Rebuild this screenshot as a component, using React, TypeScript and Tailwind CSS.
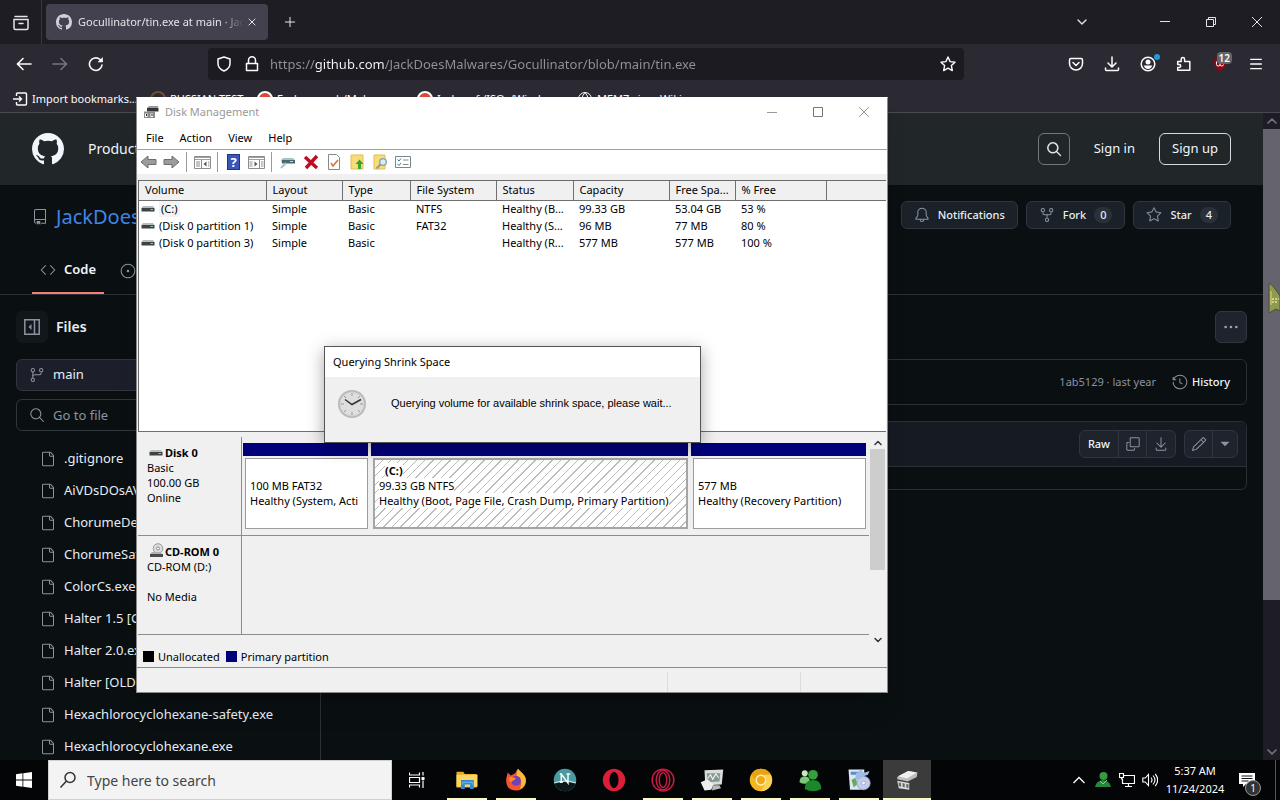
import type { ReactNode } from "react";
import {
  GoBell,
  GoCode,
  GoCopy,
  GoDownload,
  GoFile,
  GoGitBranch,
  GoHistory,
  GoIssueOpened,
  GoKebabHorizontal,
  GoPencil,
  GoRepo,
  GoRepoForked,
  GoSearch,
  GoStar,
  GoTriangleDown,
} from "react-icons/go";
import { ChevronDown, ChevronUp, Menu, Plus, X } from "lucide-react";

const files = [
  ".gitignore",
  "AiVDsDOsAV.exe",
  "ChorumeDeath.exe",
  "ChorumeSafety.exe",
  "ColorCs.exe",
  "Halter 1.5 [GDI].exe",
  "Halter 2.0.exe",
  "Halter [OLD].exe",
  "Hexachlorocyclohexane-safety.exe",
  "Hexachlorocyclohexane.exe",
];

const columns = [
  { label: "Volume", width: "w-[127px]" },
  { label: "Layout", width: "w-[76px]" },
  { label: "Type", width: "w-[68px]" },
  { label: "File System", width: "w-[86px]" },
  { label: "Status", width: "w-[77px]" },
  { label: "Capacity", width: "w-[96px]" },
  { label: "Free Spa...", width: "w-[66px]" },
  { label: "% Free", width: "w-[91px]" },
  { label: "", width: "" },
];

const volumes = [
  ["(C:)", "Simple", "Basic", "NTFS", "Healthy (B...", "99.33 GB", "53.04 GB", "53 %"],
  ["(Disk 0 partition 1)", "Simple", "Basic", "FAT32", "Healthy (S...", "96 MB", "77 MB", "80 %"],
  ["(Disk 0 partition 3)", "Simple", "Basic", "", "Healthy (R...", "577 MB", "577 MB", "100 %"],
];

function Svg({ children, size = "size-4", box = "0 0 16 16" }: { children: ReactNode; size?: string; box?: string }) {
  return (
    <svg viewBox={box} className={`${size} shrink-0`} fill="none" stroke="currentColor" aria-hidden="true">
      {children}
    </svg>
  );
}

function GithubMark({ className }: { className: string }) {
  return (
    <svg viewBox="0 0 16 16" className={`shrink-0 ${className}`} fill="currentColor" aria-hidden="true">
      <path d="M8 0c4.420 0 8 3.580 8 8a8.013 8.013 0 0 1-5.450 7.590c-.4.080-.550-.170-.550-.380 0-.270.010-1.130.010-2.200 0-.750-.250-1.230-.540-1.480 1.780-.2 3.650-.880 3.650-3.950 0-.880-.310-1.590-.820-2.150.080-.2.360-1.020-.080-2.120 0 0-.670-.220-2.200.820-.640-.180-1.320-.270-2-.270-.680 0-1.360.090-2 .270-1.530-1.030-2.200-.820-2.200-.820-.440 1.100-.160 1.920-.080 2.120-.510.560-.820 1.280-.820 2.150 0 3.060 1.860 3.750 3.640 3.950-.230.200-.440.550-.510 1.070-.460.210-1.610.550-2.330-.660-.150-.240-.600-.830-1.230-.820-.670.010-.270.380.010.530.340.190.730.900.820 1.130.160.450.680 1.310 2.690.940 0 .670.010 1.300.010 1.490 0 .210-.150.450-.550.380A7.995 7.995 0 0 1 0 8c0-4.420 3.580-8 8-8Z" />
    </svg>
  );
}

function IconButton({ label, className = "", children }: { label: string; className?: string; children: ReactNode }) {
  return (
    <button aria-label={label} className={`flex shrink-0 items-center justify-center ${className}`}>
      {children}
    </button>
  );
}

/* Browser */

function TabBar() {
  return (
    <div className="flex h-11 shrink-0 items-center bg-[#1e1d24] text-[#e4e4e8]">
      <IconButton label="Firefox View" className="h-11 w-[42px] border-r border-[#38373f]">
        <Svg size="size-5" box="0 0 20 20">
          <path d="M4 4.500h12M3 7.500h14v8.500a1.500 1.500 0 0 1-1.500 1.500h-11A1.500 1.500 0 0 1 3 16zM8 11.500h4" strokeWidth="1.500" strokeLinecap="round" />
        </Svg>
      </IconButton>
      <div className="ml-1 flex h-9 w-[222px] items-center rounded bg-[#42414d] pl-2.5 pr-2">
        <GithubMark className="size-4 text-[#d0d0d8]" />
        <span className="ml-1.5 min-w-0 flex-1 overflow-hidden whitespace-nowrap text-[11px] [mask-image:linear-gradient(to_right,black_85%,transparent)]">
          Gocullinator/tin.exe at main · JackDoesMalwares
        </span>
        <IconButton label="Close tab" className="size-4">
          <X className="size-3" />
        </IconButton>
      </div>
      <IconButton label="New tab" className="ml-2 size-7">
        <Plus className="size-4" strokeWidth={1.5} />
      </IconButton>
      <div className="ml-auto flex items-center">
        <IconButton label="List all tabs" className="mr-11 h-11 w-8">
          <ChevronDown className="size-4" strokeWidth={2} />
        </IconButton>
        <IconButton label="Minimize" className="h-11 w-[46px]">
          <Svg size="size-3" box="0 0 12 12"><path d="M1 5.500h10" /></Svg>
        </IconButton>
        <IconButton label="Restore" className="h-11 w-[46px]">
          <Svg size="size-3" box="0 0 12 12"><path d="M1.500 3.500h7v7h-7zM3.500 3.500v-2h7v7h-2" /></Svg>
        </IconButton>
        <IconButton label="Close" className="h-11 w-[46px]">
          <Svg size="size-3" box="0 0 12 12"><path d="M1 1l10 10M11 1L1 11" /></Svg>
        </IconButton>
      </div>
    </div>
  );
}

function NavBar() {
  return (
    <div className="flex h-10 shrink-0 items-center bg-[#2b2a33] text-[#fbfbfe]">
      <IconButton label="Back" className="ml-2 size-8">
        <Svg><path d="M15 8H1.500M7 2.500L1.500 8 7 13.500" strokeWidth="1.600" strokeLinecap="round" /></Svg>
      </IconButton>
      <IconButton label="Forward" className="ml-1 size-8 text-[#76757d]">
        <Svg><path d="M1 8h13.500M9 2.500L14.500 8 9 13.500" strokeWidth="1.600" strokeLinecap="round" /></Svg>
      </IconButton>
      <IconButton label="Reload" className="ml-1 size-8">
        <Svg>
          <path d="M14 9a6.300 6.300 0 1 1-2-5.500L14 5" strokeWidth="1.600" strokeLinecap="round" />
          <path d="M14.800 1v5.200H9.500z" fill="currentColor" stroke="none" />
        </Svg>
      </IconButton>
      <div className="ml-24 mr-24 flex h-8 min-w-0 flex-1 items-center rounded bg-[#1c1b22] pl-2">
        <Svg><path d="M8 1l6 2v4.500c0 3.500-2.500 6-6 7.500-3.500-1.500-6-4-6-7.500V3z" strokeWidth="1.500" strokeLinejoin="round" /></Svg>
        <span className="ml-3 flex">
          <Svg><path d="M2.500 7.500h11v7h-11zM4.500 7.500V4.300a3.500 3.500 0 0 1 7 0v3.200" strokeWidth="1.500" strokeLinejoin="round" /></Svg>
        </span>
        <label htmlFor="address" className="sr-only">Address</label>
        {/* the host name is lit by the gradient behind the clipped text */}
        <input
          id="address"
          defaultValue="https://github.com/JackDoesMalwares/Gocullinator/blob/main/tin.exe"
          className="ml-2.5 h-6 min-w-0 flex-1 bg-[linear-gradient(to_right,#93929c_45px,#fbfbfe_45px_115px,#93929c_115px)] bg-clip-text text-[13px] text-transparent outline-none"
        />
        <IconButton label="Bookmark this page" className="size-8">
          <Svg><path d="M8 1l2.100 4.600 4.900.6-3.600 3.400.9 5L8 12.200 3.700 14.600l.9-5L1 6.200l4.900-.6z" strokeWidth="1.400" strokeLinejoin="round" /></Svg>
        </IconButton>
      </div>
      <div className="mr-2 flex items-center gap-1">
        <IconButton label="Save to Pocket" className="size-8">
          <Svg><path d="M3 2.500h10q1.500 0 1.500 1.500v3.500a6.500 6.500 0 0 1-13 0V4q0-1.500 1.500-1.500zM5 6.500l3 3 3-3" strokeWidth="1.500" strokeLinecap="round" strokeLinejoin="round" /></Svg>
        </IconButton>
        <IconButton label="Downloads" className="size-8">
          <Svg><path d="M8 1v9.500M4 7l4 4 4-4M1.500 12v1.500q0 1 1 1h11q1 0 1-1V12" strokeWidth="1.500" strokeLinecap="round" /></Svg>
        </IconButton>
        <IconButton label="Account" className="relative size-8">
          <Svg>
            <circle cx="8" cy="8" r="6.800" strokeWidth="1.500" />
            <circle cx="8" cy="6" r="2.500" fill="currentColor" stroke="none" />
            <path d="M3.700 9.500h8.600c-.5 2-2.200 3.400-4.300 3.400s-3.800-1.400-4.300-3.400z" fill="currentColor" stroke="none" />
          </Svg>
          <span className="absolute right-1 top-1.5 size-1.5 rounded-full bg-[#1d9bdc]" />
        </IconButton>
        <IconButton label="Extensions" className="size-8">
          <Svg><path d="M1.700 5.500h3.500V3.200a1.700 1.700 0 0 1 3.400 0v2.300h5.200v8.800H1.700v-2.800h1.500a1.500 1.500 0 0 0 0-3H1.700z" strokeWidth="1.500" strokeLinejoin="round" /></Svg>
        </IconButton>
        <IconButton label="uBlock Origin, 12 blocked" className="relative size-8">
          <Svg>
            <path d="M8 0.500C5.500 2.300 4 2.500 2 2.500c0 7 1 9.500 6 13 5-3.500 6-6 6-13-2 0-3.500-.2-6-2z" fill="#8c0812" stroke="none" />
            <path d="M4.500 5.500v3q0 1.500 1.700 1.500T8 8.500M8 5.500v3q0 1.500 1.700 1.500t1.800-1.500" stroke="#fff" />
          </Svg>
          <span className="absolute right-1 top-1 rounded-sm bg-[#66656c] px-0.5 text-[10px] leading-3 font-semibold">12</span>
        </IconButton>
        <IconButton label="Application menu" className="size-8">
          <Menu className="size-4" strokeWidth={2} />
        </IconButton>
      </div>
    </div>
  );
}

function Bookmarks() {
  return (
    <div className="flex h-[29px] shrink-0 items-center overflow-hidden whitespace-nowrap border-b border-[#4a4952] bg-[#2b2a33] pl-3 pt-0.5 text-[11px] text-[#fbfbfe]">
      <a href="#import" className="flex w-[138px] items-center gap-1">
        <Svg><path d="M1 8h8.500M7 5.500L9.500 8 7 10.500M4.500 5V3q0-1 1-1h8q1 0 1 1v10q0 1-1 1h-8q-1 0-1-1v-2" strokeWidth="1.400" /></Svg>
        Import bookmarks...
      </a>
      <a href="#russian" className="flex w-[107px] items-center gap-1">
        <span className="size-4 rounded-full border-2 border-[#705030]" />
        RUSSIAN TEST
      </a>
      <a href="#malware" className="flex w-[160px] items-center gap-1">
        <span className="size-4 rounded-full border-2 border-white bg-[#d8493b]" />
        Endermanch/Malwar...
      </a>
      <a href="#isos" className="flex w-[160px] items-center gap-1">
        <span className="size-4 rounded-full border-2 border-white bg-[#d8493b]" />
        Index of /ISOs/Wind...
      </a>
      <a href="#memz" className="flex items-center gap-1">
        <Svg><circle cx="8" cy="8" r="6.500" /><path d="M1.500 8h13M8 1.500q-6 6.500 0 13M8 1.500q6 6.500 0 13" /></Svg>
        MEMZ virus Wiki
      </a>
    </div>
  );
}

/* Repository page */

function SiteHeader() {
  return (
    <header className="flex h-[72px] shrink-0 items-center bg-[#212628] pl-8 pr-8 text-[13px] text-[#f0f6fc]">
      <a href="#home" aria-label="GitHub">
        <GithubMark className="size-8" />
      </a>
      <nav className="ml-6 text-sm">
        <a href="#product">Product</a>
      </nav>
      <IconButton label="Search" className="ml-auto size-8 rounded-md border border-[#70777d]">
        <GoSearch className="size-4" strokeWidth={0.6} />
      </IconButton>
      <a href="#signin" className="ml-6">Sign in</a>
      <a href="#signup" className="ml-6 flex h-8 w-[72px] items-center justify-center rounded-md border border-[#d5dade]">Sign up</a>
    </header>
  );
}

function RepoHeader() {
  const action = "flex h-7 items-center gap-2 rounded-md border border-[#30363d] bg-[#1b2128] px-3 text-[11px] font-medium text-[#e6edf3]";
  return (
    <div className="flex h-[110px] shrink-0 flex-col border-b border-[#2a3036]">
      <div className="flex flex-1 items-start justify-between pl-8 pr-8 pt-4">
        <div className="flex items-center gap-2 text-xl text-[#4184e4]">
          <GoRepo className="size-4 text-[#8b949e]" />
          <a href="#owner" className="leading-8">JackDoesMalwares</a>
        </div>
        <div className="flex gap-2">
          <button className={action}>
            <GoBell className="size-4 text-[#8b949e]" />
            Notifications
          </button>
          <button className={action}>
            <GoRepoForked className="size-4 text-[#8b949e]" />
            Fork
            <span className="rounded-full bg-[#2a3138] px-1.5">0</span>
          </button>
          <button className={action}>
            <GoStar className="size-4 text-[#8b949e]" />
            Star
            <span className="rounded-full bg-[#2a3138] px-1.5">4</span>
          </button>
        </div>
      </div>
      <nav className="flex h-[46px] items-stretch gap-4 pl-8 text-[13px] text-[#f0f6fc]">
        <a href="#code" className="flex w-[72px] items-center gap-2 border-b-2 border-[#f08078] pl-2 font-semibold">
          <GoCode className="size-4 shrink-0 text-[#8b949e]" />
          Code
        </a>
        <a href="#issues" className="flex items-center gap-2">
          <GoIssueOpened className="size-4 text-[#8b949e]" />
          Issues
        </a>
      </nav>
    </div>
  );
}

function FileTree() {
  return (
    <aside className="w-[321px] shrink-0 border-r border-[#2a3036] pl-4 pr-4 pt-4 text-[13px] text-[#e6edf3]">
      <div className="flex items-center gap-2">
        <IconButton label="Collapse file tree" className="size-8 rounded-md bg-[#12171b] text-[#8b949e]">
          <Svg><path d="M.8.8h14.400v14.400H.8zM10.500 1v14" strokeWidth="1.500" /><path d="M7.500 5v6l-3-3z" fill="currentColor" stroke="none" /></Svg>
        </IconButton>
        <h2 className="text-sm font-semibold">Files</h2>
      </div>
      <button className="mt-4 flex h-8 w-full items-center gap-2 rounded-md border border-[#30363d] bg-[#1c1f2a] px-3">
        <GoGitBranch className="size-4 text-[#8b949e]" />
        main
      </button>
      <div className="mt-2 flex h-8 items-center gap-2 rounded-md border border-[#30363d] px-3">
        <GoSearch className="size-4 shrink-0 text-[#8b949e]" />
        <label htmlFor="goto" className="sr-only">Go to file</label>
        <input id="goto" placeholder="Go to file" className="h-6 min-w-0 flex-1 bg-transparent outline-none placeholder:text-[#8b949e]" />
      </div>
      <ul className="mt-3">
        {files.map((name) => (
          <li key={name}>
            <a href={`#${name}`} className="flex h-8 items-center gap-2 pl-6 whitespace-nowrap">
              <GoFile className="size-4 shrink-0 text-[#8b949e]" />
              {name}
            </a>
          </li>
        ))}
      </ul>
    </aside>
  );
}

function FileView() {
  const group = "flex h-7 divide-x divide-[#30363d] overflow-hidden rounded-md border border-[#30363d] bg-[#1f232c] text-[#8b949e]";
  return (
    <main className="flex min-w-0 flex-1 flex-col p-4 text-[11px]">
      <IconButton label="More options" className="size-8 self-end rounded-md border border-[#30363d] bg-[#1f232e] text-[#9ba3ac]">
        <GoKebabHorizontal className="size-4" />
      </IconButton>
      <div className="mt-4 flex h-[46px] items-center justify-end rounded-md border border-[#2a3036] pr-4">
        <span className="text-[#8b949e]">1ab5129 · last year</span>
        <a href="#history" className="ml-4 flex items-center gap-1 font-medium text-[#f0f6fc]">
          <GoHistory className="size-4 text-[#8b949e]" />
          History
        </a>
      </div>
      <div className="mt-4 rounded-md border border-[#2a3036]">
        <div className="flex h-[45px] items-center justify-end gap-2 rounded-t-md border-b border-[#2a3036] bg-[#151a23] pr-2">
          <div className={group}>
            <button className="px-2 font-medium text-[#f0f6fc]">Raw</button>
            <IconButton label="Copy raw file" className="w-7"><GoCopy className="size-4" /></IconButton>
            <IconButton label="Download raw file" className="w-7"><GoDownload className="size-4" /></IconButton>
          </div>
          <div className={group}>
            <IconButton label="Edit" className="w-7"><GoPencil className="size-4" /></IconButton>
            <IconButton label="More edit options" className="w-6"><GoTriangleDown className="size-4" /></IconButton>
          </div>
        </div>
        <div className="h-[22px]" />
      </div>
    </main>
  );
}

function PageScrollbar() {
  return (
    <div className="relative flex w-[17px] shrink-0 flex-col items-center bg-[#1e1d26] text-[#75747c]">
      <ChevronUp className="size-4 shrink-0" strokeWidth={2.5} />
      <div className="h-[471px] w-full bg-[#65646e]" />
      <ChevronDown className="mt-auto size-4 shrink-0" strokeWidth={2.5} />
      {/* Mouse pointer */}
      <svg viewBox="0 0 12 34" className="absolute right-0 top-[168px] h-[34px] w-3" aria-hidden="true">
        <path d="M1 2q4 2 11 13v15l-4-2-7 4z" fill="#8d9a50" stroke="#4c502c" />
        <path d="M3 10v14" stroke="#b9b760" strokeWidth="2" />
        <path d="M4 18h7M4 21h6" stroke="#e6dfa0" strokeWidth="1.500" strokeDasharray="2 1" />
      </svg>
    </div>
  );
}

/* Disk Management */

function DriveIcon() {
  return (
    <svg viewBox="0 0 14 8" className="h-2 w-3.5 shrink-0" aria-hidden="true">
      <path d="M2 1h10l1.500 2H.5z" fill="#b8bcbe" />
      <path d="M.5 3h13v3.500H.5z" fill="#3c4345" />
      <path d="M9.500 4.500h2.500" stroke="#8ac7a8" />
    </svg>
  );
}

function CdIcon() {
  return (
    <svg viewBox="0 0 16 16" className="size-4 shrink-0" aria-hidden="true">
      <circle cx="9" cy="5.500" r="4.800" fill="#dcdcdc" stroke="#999" />
      <circle cx="9" cy="5.500" r="1.500" fill="#fff" stroke="#888" />
      <path d="M1 11l2-2h9l1 2z" fill="#b0b0b0" />
      <path d="M1 11h13v3H1z" fill="#4a4a4a" />
    </svg>
  );
}

function ManagerIcon() {
  return (
    <svg viewBox="0 0 16 16" className="size-4" aria-hidden="true">
      <path d="M4 4l2-2h9.500l-1 3z" fill="#999" />
      <path d="M4 4h11.500v3.500H4z" fill="#353535" />
      <path d="M1 7.500h11V14H1z" fill="#8a8a8a" />
      <path d="M2 9.500h2.500V13H2zM7.500 9.500H10V13H7.500z" fill="#fff" />
      <path d="M3 10h1v2H3zM8.500 10h1v2h-1z" fill="#222" />
    </svg>
  );
}

function Separator() {
  return <span className="ml-[3px] mr-1 h-5 w-px shrink-0 bg-[#9a9a9a]" />;
}

function PaneIcon({ flip = false }: { flip?: boolean }) {
  return (
    <svg viewBox="0 0 17 16" className="h-4 w-[17px]" fill="none" aria-hidden="true">
      <path d="M.5 2.500h16v12H.5z" fill="#fff" stroke="#8c8c8c" />
      <path d="M1 3.500h15M1 5.500h15" stroke="#a0a0a0" />
      {flip ? (
        <>
          <path d="M11.500 6v8M13 8h2.500M13 10h2.500M13 12h2.500M1.500 8h3M1.500 10h3M1.500 12h3" stroke="#8c8c8c" />
          <path d="M6.500 7.500v5l3-2.500z" fill="#555" />
        </>
      ) : (
        <>
          <path d="M7.500 6v8M2 8h4M2 10h4M2 12h4M14 8h1.500M14 10h1.500M14 12h1.500" stroke="#8c8c8c" />
          <path d="M12.500 7.500v5l-3-2.500z" fill="#555" />
        </>
      )}
    </svg>
  );
}

function Toolbar() {
  return (
    <div className="flex h-6 items-center">
      <IconButton label="Back" className="w-[23px]">
        <Svg size="h-4 w-[17px]" box="0 0 17 16"><path d="M1 8l7-6v3.500h8v5H8V14z" fill="#9c9c9c" stroke="#6d6d6d" /></Svg>
      </IconButton>
      <IconButton label="Forward" className="w-[23px]">
        <Svg size="h-4 w-[17px]" box="0 0 17 16"><path d="M16 8L9 2v3.500H1v5h8V14z" fill="#9c9c9c" stroke="#6d6d6d" /></Svg>
      </IconButton>
      <Separator />
      <IconButton label="Show console tree" className="w-[23px]"><PaneIcon /></IconButton>
      <Separator />
      <IconButton label="Help" className="w-[23px]">
        <span className="flex h-4 w-[13px] items-center justify-center border border-[#1d338a] bg-[#3a56b8] text-[13px] font-bold text-white">?</span>
      </IconButton>
      <IconButton label="Show action pane" className="w-[23px]"><PaneIcon flip /></IconButton>
      <Separator />
      <IconButton label="Connect" className="w-[23px]">
        <svg viewBox="0 0 16 16" className="size-4" aria-hidden="true">
          <path d="M3 4h10l2 2H1z" fill="#a9c2c9" />
          <path d="M1.500 6h13.500v3.500H2z" fill="#4b6870" />
          <path d="M1 14l5-5" stroke="#9fc6cf" strokeWidth="2" />
          <path d="M10 7.500h3" stroke="#a5e0b8" />
        </svg>
      </IconButton>
      <IconButton label="Delete" className="w-[23px]">
        <Svg><path d="M2 3l12 11M14 2L3 14" stroke="#c00d1e" strokeWidth="3.400" /></Svg>
      </IconButton>
      <IconButton label="Properties" className="w-[23px]">
        <Svg><path d="M2.500.5h8l3 3v12h-11z" fill="#fff" stroke="#888" /><path d="M5 9l2 3 5-6" stroke="#d8733a" strokeWidth="1.600" /></Svg>
      </IconButton>
      <IconButton label="Open" className="w-[23px]">
        <Svg><path d="M2 1h12v14H2z" fill="#f8dc7a" stroke="#e2bf52" /><path d="M10.500 5.500l4 4.500h-2.500v5h-3v-5H6.500z" fill="#37a52c" stroke="none" /></Svg>
      </IconButton>
      <IconButton label="Find" className="w-[23px]">
        <Svg><path d="M2 1h11v14H2z" fill="#f8dc7a" stroke="#e2bf52" /><circle cx="11" cy="8" r="3.300" fill="#d7ecf5" stroke="#829fae" strokeWidth="1.300" /><path d="M8.500 10.500l-4 4" stroke="#829fae" strokeWidth="2" /></Svg>
      </IconButton>
      <IconButton label="Settings" className="w-[23px]">
        <Svg><path d="M.5 2.500h15v11H.5z" fill="#fff" stroke="#76858e" /><path d="M8 6h5.500M8 10.500h5.500" stroke="#8a8a8a" /><path d="M2.500 5.500L4 7l2-2.500M2.500 10L4 11.500 6 9" stroke="#3b7890" /></Svg>
      </IconButton>
    </div>
  );
}

function VolumeTable() {
  return (
    <div className="h-[251px] border-l border-t border-[#6a6a6a] bg-white">
      <table className="w-full table-fixed border-collapse text-left">
        <thead>
          <tr className="h-[19px] border-b border-[#707070] bg-[#f0f0f0]">
            {columns.map((column) => (
              <th key={column.label} scope="col" className={`${column.width} border-r border-[#707070] p-0 pl-1.5 font-normal whitespace-nowrap last:border-r-0`}>
                {column.label}
              </th>
            ))}
          </tr>
        </thead>
        <tbody>
          {volumes.map((row, r) => (
            <tr key={row[0]} className="h-[17px]">
              {row.map((cell, c) =>
                c === 0 ? (
                  <td key={c} className="p-0 pl-0.5 whitespace-nowrap">
                    <span className="flex items-center gap-1">
                      <DriveIcon />
                      <span className={r === 0 ? "bg-[#f3f3f3] px-0.5" : ""}>{cell}</span>
                    </span>
                  </td>
                ) : (
                  <td key={c} className="p-0 pl-1.5 whitespace-nowrap">{cell}</td>
                ),
              )}
              <td className="p-0" />
            </tr>
          ))}
        </tbody>
      </table>
    </div>
  );
}

function Partition({ className, selected = false, children }: { className: string; selected?: boolean; children: ReactNode }) {
  return (
    <div className={`flex flex-col gap-0.5 ${className}`}>
      <div className="h-[13px] bg-[#00007b]" />
      <div
        className={`ml-0.5 flex flex-1 flex-col overflow-hidden border pl-1 whitespace-nowrap ${
          selected
            ? "border-2 border-[#a5a5a5] bg-[repeating-linear-gradient(135deg,#fff_0_5px,#bcbcbc_5px_6px)]"
            : "border-[#9c9c9c] bg-white pt-px"
        }`}
      >
        {children}
      </div>
    </div>
  );
}

function DiskGraph() {
  const label = "w-[104px] shrink-0 border-r border-[#8c8c8c] pl-[9px] pt-2";
  return (
    <div className="flex h-[209px] bg-[#f0f0f0] leading-[15px]">
      <div className="min-w-0 flex-1">
        <div className="flex h-[99px] border-b border-[#8c8c8c]">
          <div className={label}>
            <div className="flex items-center gap-0.5 pl-0.5 font-bold"><DriveIcon />Disk 0</div>
            <div>Basic</div>
            <div>100.00 GB</div>
            <div>Online</div>
          </div>
          <div className="flex min-w-0 flex-1 gap-[3px] pb-1.5 pl-px pr-[3px] pt-1.5">
            <Partition className="w-[125px]">
              <div className="pt-[18px]">100 MB FAT32</div>
              <div>Healthy (System, Acti</div>
            </Partition>
            <Partition className="w-[317px]" selected>
              <div className="pl-1.5 pt-[3px] font-bold"><span className="bg-white">(C:)</span></div>
              <div><span className="bg-white">99.33 GB NTFS</span></div>
              <div><span className="bg-white">Healthy (Boot, Page File, Crash Dump, Primary Partition)</span></div>
            </Partition>
            <Partition className="min-w-0 flex-1">
              <div className="pt-[18px]">577 MB</div>
              <div>Healthy (Recovery Partition)</div>
            </Partition>
          </div>
        </div>
        <div className="flex h-[99px] border-b border-[#8c8c8c]">
          <div className={label}>
            <div className="flex h-[15px] items-end pl-0.5 font-bold"><CdIcon />CD-ROM 0</div>
            <div>CD-ROM (D:)</div>
            <div className="pt-[15px]">No Media</div>
          </div>
        </div>
      </div>
      <div className="flex w-[17px] flex-col items-center text-[#333]">
        <ChevronUp className="size-3 shrink-0" strokeWidth={3} />
        <div className="h-[121px] w-[15px] bg-[#cdcdcd]" />
        <ChevronDown className="mt-auto size-3 shrink-0" strokeWidth={3} />
      </div>
    </div>
  );
}

function DiskManagement() {
  return (
    <section aria-label="Disk Management" className="absolute left-[136px] top-[97px] w-[752px] border border-[#8a8a8a] border-t-white bg-white text-[11px] leading-4 text-black shadow-xl">
      <div className="flex h-7 items-center pl-1.5 text-[#999]">
        <ManagerIcon />
        <h1 className="ml-1.5">Disk Management</h1>
        <div className="ml-auto flex">
          <IconButton label="Minimize window" className="w-[46px]"><Svg size="size-3" box="0 0 12 12"><path d="M1 6.500h10" /></Svg></IconButton>
          <IconButton label="Maximize window" className="w-[46px]"><Svg size="size-3" box="0 0 12 12"><path d="M1.500 1.500h9v9h-9z" stroke="#777" /></Svg></IconButton>
          <IconButton label="Close window" className="w-[46px]"><Svg size="size-3" box="0 0 12 12"><path d="M1 1l10 10M11 1L1 11" /></Svg></IconButton>
        </div>
      </div>
      <nav className="flex h-6 items-center gap-4 border-b border-[#a0a0a0] pl-[9px]">
        <button>File</button>
        <button>Action</button>
        <button>View</button>
        <button>Help</button>
      </nav>
      <Toolbar />
      <div className="bg-[#f0f0f0] pt-1.5">
        <div className="px-px"><VolumeTable /></div>
        <div className="mx-px h-1.5 border-t border-[#707070]" />
        <div className="px-px"><DiskGraph /></div>
        <div className="flex h-[22px] items-center border-b border-[#8c8c8c] pl-1.5">
          <span className="size-[11px] bg-black" />
          <span className="ml-1">Unallocated</span>
          <span className="ml-1.5 size-[11px] bg-[#00007b]" />
          <span className="ml-1">Primary partition</span>
        </div>
        <div className="flex h-6 justify-end divide-x divide-[#dcdcdc] pt-1">
          <span />
          <span className="w-[133px]" />
          <span className="w-[86px]" />
        </div>
      </div>
    </section>
  );
}

function ShrinkDialog() {
  return (
    <section role="dialog" aria-label="Querying Shrink Space" className="absolute left-[324px] top-[346px] w-[377px] border border-[#555] bg-[#f0f0f0] text-[11px] text-black shadow-[0_4px_16px_rgba(0,0,0,.35)]">
      <h2 className="flex h-[30px] items-center bg-white pl-2">Querying Shrink Space</h2>
      <div className="flex h-[65px] items-center pb-3 pl-3">
        <svg viewBox="0 0 30 30" className="size-[30px]" aria-hidden="true">
          <circle cx="15" cy="15" r="14" fill="#b9b9b9" />
          <circle cx="15" cy="15" r="12" fill="#dedede" stroke="#cfcfcf" />
          <path d="M15 4v3M15 23v3M4 15h3M23 15h3M7 7l2 2M21 21l2 2M7 23l2-2M21 9l2-2" stroke="#999" />
          <path d="M8 10.500l7 5 9-5" fill="none" stroke="#333" strokeWidth="1.500" />
        </svg>
        <p className="ml-6 font-['Liberation_Sans',sans-serif]">Querying volume for available shrink space, please wait...</p>
      </div>
    </section>
  );
}

/* Taskbar */

const apps = [
  {
    name: "File Explorer",
    open: true,
    icon: (
      <>
        <path d="M2 5h9l2 3h16v18H2z" fill="#e9ab25" />
        <path d="M2 9h28v16H2z" fill="#fbd660" />
        <path d="M8 16h17v12h-5v-6h-7v6H8z" fill="#2f87d6" />
        <path d="M10 22v-3h13v3" stroke="#8cc9f5" fill="none" />
      </>
    ),
  },
  {
    name: "Firefox",
    open: true,
    icon: (
      <>
        <path d="M3 14l2-8 4 4 6-3 3-6c2 3 6 5 9 9 6 10-1 20-11 20S2 23 3 14z" fill="#f25530" />
        <path d="M17 6l2-5c2 4 8 6 10 13 1 8-4 13-8 14 4-8 2-14-4-17z" fill="#fdbb35" />
        <circle cx="16" cy="17" r="6.500" fill="#7041b8" />
        <path d="M7 13c3-2 6 0 9 1-3 3-4 2-6 5-3-1-4-3-3-6z" fill="#fb8b35" />
      </>
    ),
  },
  {
    name: "Netscape",
    open: false,
    icon: (
      <>
        <circle cx="16" cy="16" r="15" fill="#4a9aa3" />
        <path d="M1.500 20q14.500-5 29 0a15 15 0 0 1-29 0z" fill="#0b1719" />
        <path d="M1.500 20q14.500-5 29 0" stroke="#cfe8ea" strokeWidth="1.500" fill="none" />
        <path d="M9 19h4M11 19V8H9M11 8l9 12V8M18 8h5" stroke="#f0fafa" strokeWidth="2" fill="none" />
      </>
    ),
  },
  {
    name: "Opera",
    open: false,
    icon: <path d="M16 1a15 15 0 1 0 .01 0zM16 5q6 2 6 11t-6 11q-6-2-6-11t6-11z" fill="#dc1f38" fillRule="evenodd" />,
  },
  {
    name: "Opera GX",
    open: true,
    icon: (
      <g fill="none" stroke="#c41c42" strokeWidth="2">
        <circle cx="16" cy="16" r="14.500" />
        <ellipse cx="16" cy="16" rx="9" ry="13" />
        <ellipse cx="16" cy="16" rx="5" ry="10" />
      </g>
    ),
  },
  {
    name: "System Monitor",
    open: true,
    icon: (
      <>
        <path d="M6 3l25-1-2 20-22 1z" fill="#d9dcda" />
        <path d="M9 7h18l-1 11-16 1z" fill="#87988f" />
        <path d="M10 14l4-5 3 6 4-7 4 5" stroke="#eef5ef" strokeWidth="1.500" fill="none" />
        <path d="M1 19l9-4 8 7-3 7-9 1z" fill="#ededed" />
        <path d="M17 23h9l2 4-12 3z" fill="#b8bcb9" />
      </>
    ),
  },
  {
    name: "Chrome Canary",
    open: true,
    icon: (
      <>
        <circle cx="16" cy="16" r="15" fill="#f6b61f" />
        <path d="M16 1a15 15 0 0 1 13 8H16a7 7 0 0 0-6 10L3 9a15 15 0 0 1 13-8z" fill="#e8a315" />
        <path d="M29 9a15 15 0 0 1-13 22l6-11a7 7 0 0 0-2-11z" fill="#fcd34e" />
        <circle cx="16" cy="16" r="7.500" fill="#fff0b8" />
        <circle cx="16" cy="16" r="5.500" fill="#efa91c" />
      </>
    ),
  },
  {
    name: "Messenger",
    open: true,
    icon: (
      <>
        <circle cx="9" cy="7" r="4" fill="#c5e8bf" />
        <path d="M2 19q0-8 7-8t7 8q-7 4-14 0z" fill="#7fc67a" />
        <circle cx="20" cy="9" r="6.500" fill="#32a13a" />
        <path d="M9 28q0-12 11-12t11 12q-11 6-22 0z" fill="#1b862a" />
      </>
    ),
  },
  {
    name: "Disk Tools",
    open: true,
    icon: (
      <>
        <path d="M2 2h21v27H4z" fill="#dce7f5" />
        <path d="M5 5h14v4H5z" fill="#5a8dcd" />
        <path d="M6 16l5-3 3 8-5 5z" fill="#6aa957" />
        <circle cx="22" cy="20" r="9" fill="#c3cdea" stroke="#7f94bd" />
        <circle cx="22" cy="20" r="2.500" fill="#f9f9ff" stroke="#8b9dc5" />
        <path d="M12 6q4 1 5-4l3 1q0 3 4 3l6-2-2 5-6 2-8 6-3-3z" fill="#9fbce2" />
      </>
    ),
  },
];

function Taskbar() {
  return (
    <footer className="flex h-10 shrink-0 items-stretch bg-[#040506] text-white">
      <IconButton label="Start" className="w-12">
        <svg viewBox="0 0 16 16" className="size-4" fill="#fff" aria-hidden="true">
          <path d="M0 2.200l6.500-.9v6.300H0zM7.300 1.200L16 0v7.600H7.300zM0 8.400h6.500v6.300L0 13.800zM7.300 8.400H16V16l-8.700-1.200z" />
        </svg>
      </IconButton>
      <div className="flex w-[344px] items-center border border-[#d0d0d0] bg-[#f3f3f3] pl-2.5 text-[#333]">
        <Svg size="size-[18px]" box="0 0 18 18"><circle cx="11" cy="6.500" r="5" strokeWidth="1.500" /><path d="M7.500 10L1.500 16.500" strokeWidth="1.500" /></Svg>
        <label htmlFor="search" className="sr-only">Search</label>
        <input id="search" placeholder="Type here to search" className="ml-2.5 h-6 min-w-0 flex-1 bg-transparent text-sm outline-none placeholder:text-[#444]" />
      </div>
      <IconButton label="Task View" className="mr-px w-[49px]">
        <Svg><path d="M.5.5v2.500h10V.5M.5 5.500h10v5H.5zM.5 15.500V13h10v2.500M14 0v3.500M14 8.500V16" strokeWidth="1.200" /><path d="M12.500 5h3v3h-3z" fill="currentColor" stroke="none" /></Svg>
      </IconButton>
      {apps.map((app) => (
        <button key={app.name} aria-label={app.name} className="flex w-[49px] flex-col items-center justify-between pt-2">
          <svg viewBox="0 0 32 32" className="size-6" aria-hidden="true">{app.icon}</svg>
          <span className={app.open ? "h-0.5 w-10 bg-[#fbfbc8]" : "h-0.5 w-10"} />
        </button>
      ))}
      <button aria-label="Disk Management" className="flex w-12 flex-col items-center justify-between bg-[#3b3b3b] pt-2">
        <svg viewBox="0 0 32 32" className="size-6" aria-hidden="true">
          <path d="M3 12l14-8 13 2-1 6-12 6-14-3z" fill="#bdbdbd" />
          <path d="M4 11l14-7 11 2-13 8z" fill="#f0f0f0" />
          <path d="M3 17l16 3v9L5 27z" fill="#dcdcdc" />
          <path d="M5 19l3 1v5l-3-1zM10 20l3 1v5l-3-1zM15 21l3 1v5l-3-1z" fill="#6a6a6a" />
        </svg>
        <span className="h-0.5 w-full bg-[#fbfbc8]" />
      </button>
      <div className="ml-auto flex items-center">
        <IconButton label="Show hidden icons" className="w-6">
          <Svg size="size-3" box="0 0 12 12"><path d="M.5 9L6 3.500 11.500 9" strokeWidth="1.300" /></Svg>
        </IconButton>
        <IconButton label="Messenger status" className="w-6">
          <svg viewBox="0 0 16 16" className="size-4" aria-hidden="true">
            <circle cx="8.500" cy="4" r="4" fill="#359c43" />
            <path d="M0 15q1-6 8-7 7 1 8 7z" fill="#27883a" />
            <path d="M5 9l3 3 4-4" stroke="#8bd08f" fill="none" />
          </svg>
        </IconButton>
        <IconButton label="Network" className="w-6">
          <Svg><path d="M5 3.500h10.500v8H3.500V7M9.500 11.500v3M6 14.500h7M.5 1.500h4v4h-4zM2.500 5.500V7H4" strokeWidth="1.200" /></Svg>
        </IconButton>
        <IconButton label="Volume" className="w-[22px]">
          <Svg><path d="M.8 6h2.500L6.500 2.500v11L3.300 10H.8zM9 5.500q2 2.500 0 5M11 3.500q4 4.500 0 9M13.200 1.800q5 6.200 0 12.400" strokeWidth="1.100" /></Svg>
        </IconButton>
        <button className="w-[68px] text-center text-[11px] leading-[18px]">
          <span className="block">5:37 AM</span>
          <span className="block">11/24/2024</span>
        </button>
        <IconButton label="Notifications, 1 new" className="relative w-9">
          <Svg><path d="M0 1h16v11H7l-3 3v-3H0z" fill="#fff" stroke="none" /><path d="M2.500 4h11M2.500 6.500h11M2.500 9h7" stroke="#111" /></Svg>
          <span className="absolute -bottom-2 right-1 size-4 rounded-full border border-[#999] bg-[#333] text-[10px] leading-[14px]">1</span>
        </IconButton>
        <span className="ml-2.5 mr-1 h-10 w-px bg-[#555]" />
      </div>
    </footer>
  );
}

export default function App() {
  return (
    <div className="relative flex h-screen flex-col overflow-hidden bg-[#0a0f12] font-['Noto_Sans',sans-serif]">
      <TabBar />
      <NavBar />
      <Bookmarks />
      <div className="flex min-h-0 flex-1">
        <div className="flex min-w-0 flex-1 flex-col overflow-hidden">
          <SiteHeader />
          <RepoHeader />
          <div className="flex flex-1">
            <FileTree />
            <FileView />
          </div>
        </div>
        <PageScrollbar />
      </div>
      <Taskbar />
      <DiskManagement />
      <ShrinkDialog />
    </div>
  );
}
